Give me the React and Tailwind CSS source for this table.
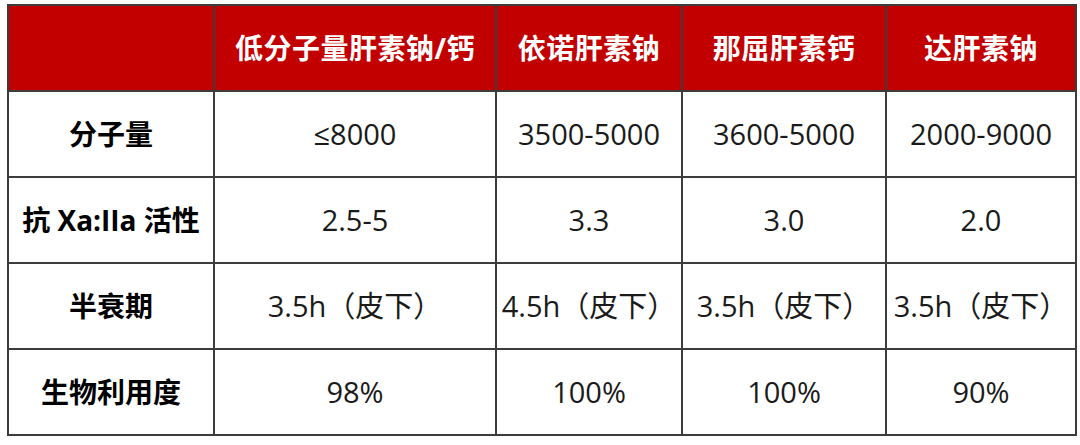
import React from "react";

const cols = [
  { w: "w-[206px]" },
  { w: "w-[282px]" },
  { w: "w-[186px]" },
  { w: "w-[204px]" },
  { w: "w-[190px]" },
];

const header = ["", "低分子量肝素钠/钙", "依诺肝素钠", "那屈肝素钙", "达肝素钠"];

const rows = [
  ["分子量", "≤8000", "3500-5000", "3600-5000", "2000-9000"],
  ["抗 Xa:IIa 活性", "2.5-5", "3.3", "3.0", "2.0"],
  ["半衰期", "3.5h（皮下）", "4.5h（皮下）", "3.5h（皮下）", "3.5h（皮下）"],
  ["生物利用度", "98%", "100%", "100%", "90%"],
];

export default function App() {
  return (
    <div
      className="w-[1080px] h-[445px] bg-white pl-[7px] pt-[4px]"
      style={{ fontFamily: '"Open Sans", "Noto Sans CJK SC", sans-serif' }}
    >
      <table className="border-collapse border-2 border-[#3c3c3c] table-fixed w-[1068px]">
        <colgroup>
          {cols.map((c, i) => (
            <col key={i} className={c.w} />
          ))}
        </colgroup>
        <thead>
          <tr className="h-[86px] bg-[#c30000]">
            {header.map((h, i) => (
              <th
                key={i}
                className="border-2 border-[#3c3c3c] text-white font-bold text-[28px] text-center align-middle tracking-[0.5px]"
              >
                {h}
              </th>
            ))}
          </tr>
        </thead>
        <tbody>
          {rows.map((r, ri) => (
            <tr key={ri} className="h-[86px]">
              {r.map((c, ci) => (
                <td
                  key={ci}
                  className={
                    "border-2 border-[#3c3c3c] text-center align-middle " +
                    (ci === 0
                      ? "font-bold text-black text-[28px]"
                      : "font-normal text-[#1a1a1a] text-[29px]")
                  }
                >
                  {c}
                </td>
              ))}
            </tr>
          ))}
        </tbody>
      </table>
    </div>
  );
}
